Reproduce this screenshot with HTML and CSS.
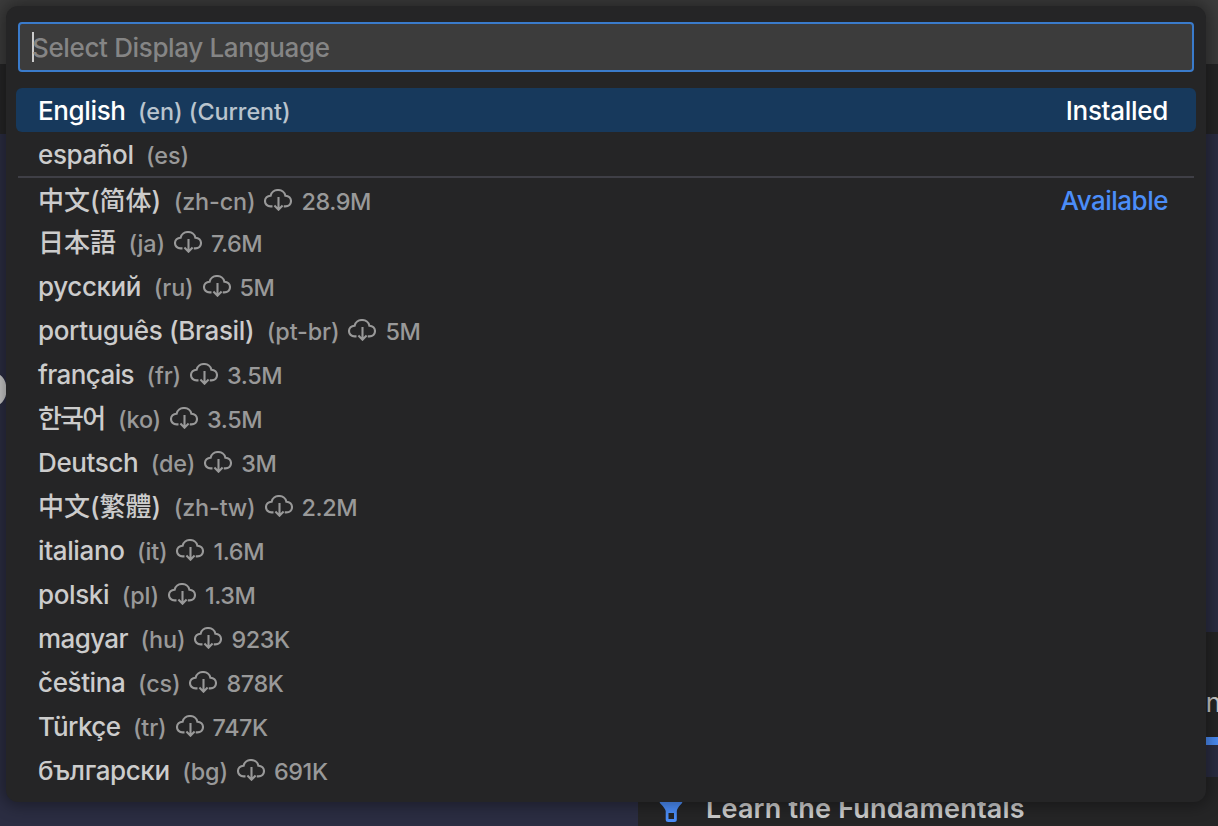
FILE: index.html
```
<!DOCTYPE html>
<html lang="en">
<head>
<meta charset="utf-8">
<title>Select Display Language</title>
<link rel="stylesheet" href="styles.css">
</head>
<body>
<svg class="sprite" aria-hidden="true">
  <symbol id="cloud" viewBox="0 0 28 22">
    <path d="M8.500 17.400H6.600C3.400 17.400 1 15.100 1 12.100S3.300 6.900 6.600 6.700C7.300 3.300 10.400 1 14 1s6.800 2.300 7.400 5.700C24.700 6.900 27 9.100 27 12.100s-2.400 5.300-5.600 5.300h-1.600M14.500 8v12.600M10.400 16.600l4.100 4.100 4.100-4.100"/>
  </symbol>
</svg>
<div class="workbench">
  <div class="titlebar"></div>
  <div class="tabs"></div>
  <div class="welcome">
    <div class="headline">o</div>
    <div class="cards">
      <div class="card card-first"><span>n</span><div class="progress"></div></div>
      <div class="card card-second">
        <svg class="torch" width="24" height="26" viewBox="0 0 24 26"><path d="M0 0h24v4l-1.300 2.500Q18 11 17.800 14v8.500q0 2.500-2.500 2.500H9.200q-2.500 0-2.500-2.500V14Q6 11 1.300 6.500L0 4zM9.500 16v6h5.500v-6z" fill="#4b8df8" fill-rule="evenodd"/></svg>
        <span class="card-title">Learn the Fundamentals</span>
      </div>
    </div>
  </div>
</div>
<div class="quick-input">
  <div class="field"><span class="caret"></span><span class="placeholder">Select Display Language</span></div>
  <div class="list">
    <div class="row selected"><span class="label">English</span><span class="desc">(en) (Current)</span><span class="group">Installed</span></div>
    <div class="row"><span class="label">español</span><span class="desc">(es)</span></div>
    <div class="row divided"><span class="label cjk" lang="zh-CN">中文(简体)</span><span class="desc">(zh-cn)</span><svg class="icon"><use href="#cloud"/></svg><span class="size">28.9M</span><span class="group">Available</span></div>
    <div class="row"><span class="label cjk jp" lang="ja">日本語</span><span class="desc">(ja)</span><svg class="icon"><use href="#cloud"/></svg><span class="size">7.6M</span></div>
    <div class="row"><span class="label">русский</span><span class="desc">(ru)</span><svg class="icon"><use href="#cloud"/></svg><span class="size">5M</span></div>
    <div class="row"><span class="label">português (Brasil)</span><span class="desc">(pt-br)</span><svg class="icon"><use href="#cloud"/></svg><span class="size">5M</span></div>
    <div class="row"><span class="label tight">français</span><span class="desc">(fr)</span><svg class="icon"><use href="#cloud"/></svg><span class="size">3.5M</span></div>
    <div class="row"><span class="label cjk kr" lang="ko">한국어</span><span class="desc">(ko)</span><svg class="icon"><use href="#cloud"/></svg><span class="size">3.5M</span></div>
    <div class="row"><span class="label">Deutsch</span><span class="desc">(de)</span><svg class="icon"><use href="#cloud"/></svg><span class="size">3M</span></div>
    <div class="row"><span class="label cjk tc" lang="zh-TW">中文(繁體)</span><span class="desc">(zh-tw)</span><svg class="icon"><use href="#cloud"/></svg><span class="size">2.2M</span></div>
    <div class="row"><span class="label">italiano</span><span class="desc">(it)</span><svg class="icon"><use href="#cloud"/></svg><span class="size">1.6M</span></div>
    <div class="row"><span class="label">polski</span><span class="desc">(pl)</span><svg class="icon"><use href="#cloud"/></svg><span class="size">1.3M</span></div>
    <div class="row"><span class="label tight">magyar</span><span class="desc">(hu)</span><svg class="icon"><use href="#cloud"/></svg><span class="size">923K</span></div>
    <div class="row"><span class="label">čeština</span><span class="desc">(cs)</span><svg class="icon"><use href="#cloud"/></svg><span class="size">878K</span></div>
    <div class="row"><span class="label tight">Türkçe</span><span class="desc">(tr)</span><svg class="icon"><use href="#cloud"/></svg><span class="size">747K</span></div>
    <div class="row"><span class="label">български</span><span class="desc">(bg)</span><svg class="icon"><use href="#cloud"/></svg><span class="size">691K</span></div>
  </div>
</div>
</body>
</html>
```
FILE: styles.css
```
* { box-sizing: border-box; }
body {
  margin: 0;
  width: 1218px;
  height: 826px;
  overflow: hidden;
  position: relative;
  background: #2b2d42;
  font-family: Inter, "Noto Sans CJK SC", sans-serif;
  color: #cccccc;
}
.sprite { position: absolute; width: 0; height: 0; }
.workbench { display: flex; flex-direction: column; height: 826px; }
.titlebar { height: 64px; background: #3c3c3c; }
.tabs { height: 70px; background: #252526; }
.welcome { flex: 1; display: flex; justify-content: space-between; padding-top: 498px; overflow: hidden; }
.headline { font-size: 62px; font-weight: 550; line-height: 60px; height: 60px; margin: -278px 0 0 -28px; color: #cccccc; }
.cards { width: 580px; display: flex; flex-direction: column; gap: 32px; }
.card { background: #252526; overflow: hidden; }
.card-first { height: 113px; display: flex; flex-direction: column; justify-content: space-between; align-items: flex-end; padding-top: 57px; font-size: 26px; line-height: 28px; }
.card-first span { margin-right: -3px; }
.progress { width: 100%; height: 8px; background: #4b8df8; }
.card-second { height: 49px; display: flex; align-items: flex-start; gap: 24px; padding: 20px 0 0 21px; }
.card-title { font-size: 27px; font-weight: 600; line-height: 32px; margin: -4px 0 0 -1px; letter-spacing: .2px; white-space: nowrap; }
.quick-input {
  position: absolute;
  left: 6px;
  top: 6px;
  width: 1200px;
  height: 796px;
  padding: 16px 10px 0;
  border-radius: 12px;
  background: #252526;
  box-shadow: 0 0 16px 4px rgba(0, 0, 0, .36);
}
.field {
  display: flex;
  align-items: center;
  height: 50px;
  margin: 0 2px 16px;
  padding-left: 12px;
  border: 2px solid #3a7bcb;
  border-radius: 4px;
  background: #3c3c3c;
}
.caret { width: 2px; height: 30px; margin-right: -2px; background: #cccccc; }
.placeholder { font-size: 26px; font-weight: 450; letter-spacing: -.36px; color: #858585; }
.row {
  display: flex;
  align-items: baseline;
  height: 44px;
  line-height: 44px;
  padding: 1px 28px 0 22px;
  white-space: nowrap;
}
.selected { border-radius: 6px; background: #17395c; color: #ffffff; }
.divided { margin: 0 2px; padding: 1px 26px 0 20px; border-top: 2px solid #3f3f46; }
.label { font-size: 26px; font-weight: 450; letter-spacing: -.38px; margin-right: 12.500px; }
.cjk { letter-spacing: 0; }
.tight { letter-spacing: -.6px; }
.jp { font-family: Inter, "Noto Sans CJK JP", sans-serif; }
.kr { font-family: Inter, "Noto Sans CJK KR", sans-serif; letter-spacing: -1.8px; margin-right: 13.500px; }
.tc { font-family: Inter, "Noto Sans CJK TC", sans-serif; }
.desc, .size { font-size: 23.4px; font-weight: 450; letter-spacing: -.15px; color: #999999; }
.size { letter-spacing: -.4px; }
.selected .desc { color: #b9c4ce; letter-spacing: -.05px; }
.icon {
  width: 28px;
  height: 22px;
  margin: 0 9px 0 9px;
  transform: translateY(1px);
  fill: none;
  stroke: #999999;
  stroke-width: 2.1;
}
.group { margin-left: auto; font-size: 26px; font-weight: 450; letter-spacing: -.3px; }
.divided .group { letter-spacing: -.5px; color: #4b8df8; }
```
